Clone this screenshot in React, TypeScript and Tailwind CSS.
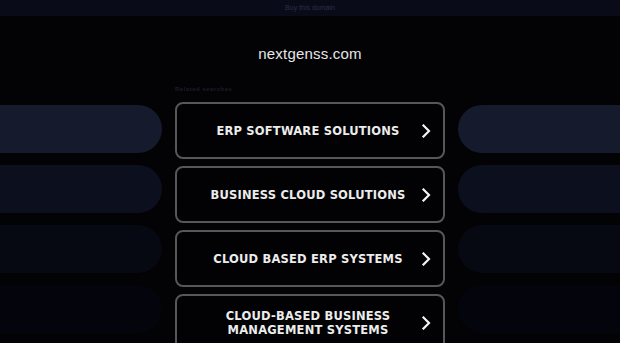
import React from "react";

const items = [
  ["ERP SOFTWARE SOLUTIONS"],
  ["BUSINESS CLOUD SOLUTIONS"],
  ["CLOUD BASED ERP SYSTEMS"],
  ["CLOUD-BASED BUSINESS", "MANAGEMENT SYSTEMS"],
];

const bars = ["bg-[#151a2d]", "bg-[#0c0f1d]", "bg-[#060812]", "bg-[#04050c]"];

function Chevron() {
  return (
    <svg width="10" height="14" viewBox="0 0 10 14" className="shrink-0">
      <path d="M2.5 1.5 L8 7 L2.5 12.5" fill="none" stroke="#f2f2f2" strokeWidth="2.2" strokeLinecap="square" />
    </svg>
  );
}

export default function App() {
  return (
    <div className="w-[620px] h-[343px] overflow-hidden bg-[#030306] flex flex-col" style={{ fontFamily: "'DejaVu Sans', sans-serif" }}>
      <div className="h-[16px] bg-[#0a0b19] flex items-center justify-center shrink-0">
        <span className="text-[7px] text-[#2c2f48]" style={{ fontFamily: "'Liberation Sans', Arial, sans-serif" }}>Buy this domain</span>
      </div>
      <div className="h-[76px] flex flex-col items-center shrink-0">
        <div className="mt-[28px] text-[15px] leading-[20px] text-[#e6e6e6] tracking-[0.2px]" style={{ fontFamily: "'Liberation Sans', Arial, sans-serif" }}>nextgenss.com</div>
        <div className="w-[270px] mt-[21px] text-[6px] leading-[8px] text-[#1c1d2c] font-bold tracking-[0.5px]" style={{ fontFamily: "'Liberation Sans', Arial, sans-serif" }}>Related searches</div>
      </div>
      <div className="flex gap-[13px] mt-[10px]">
        <div className="flex flex-col gap-[12px] pt-[3px] shrink-0">
          {bars.map((b, i) => (
            <div key={i} className={`w-[162px] h-[48px] rounded-r-[24px] ${b}`} />
          ))}
        </div>
        <div className="flex flex-col gap-[7px] shrink-0">
          {items.map((label, i) => (
            <div key={i} className="w-[270px] h-[57px] border-2 border-[#575757] rounded-[8px] bg-[#020204] flex items-center pl-[18px] pr-[12px]">
              <div className="flex-1 flex flex-col items-center text-[11.5px] leading-[14px] font-bold text-[#ececec] tracking-[0.2px] whitespace-nowrap">
                {label.map((l, j) => (
                  <span key={j}>{l}</span>
                ))}
              </div>
              <Chevron />
            </div>
          ))}
        </div>
        <div className="flex flex-col gap-[12px] pt-[3px] shrink-0">
          {bars.map((b, i) => (
            <div key={i} className={`w-[162px] h-[48px] rounded-l-[24px] ${b}`} />
          ))}
        </div>
      </div>
    </div>
  );
}
